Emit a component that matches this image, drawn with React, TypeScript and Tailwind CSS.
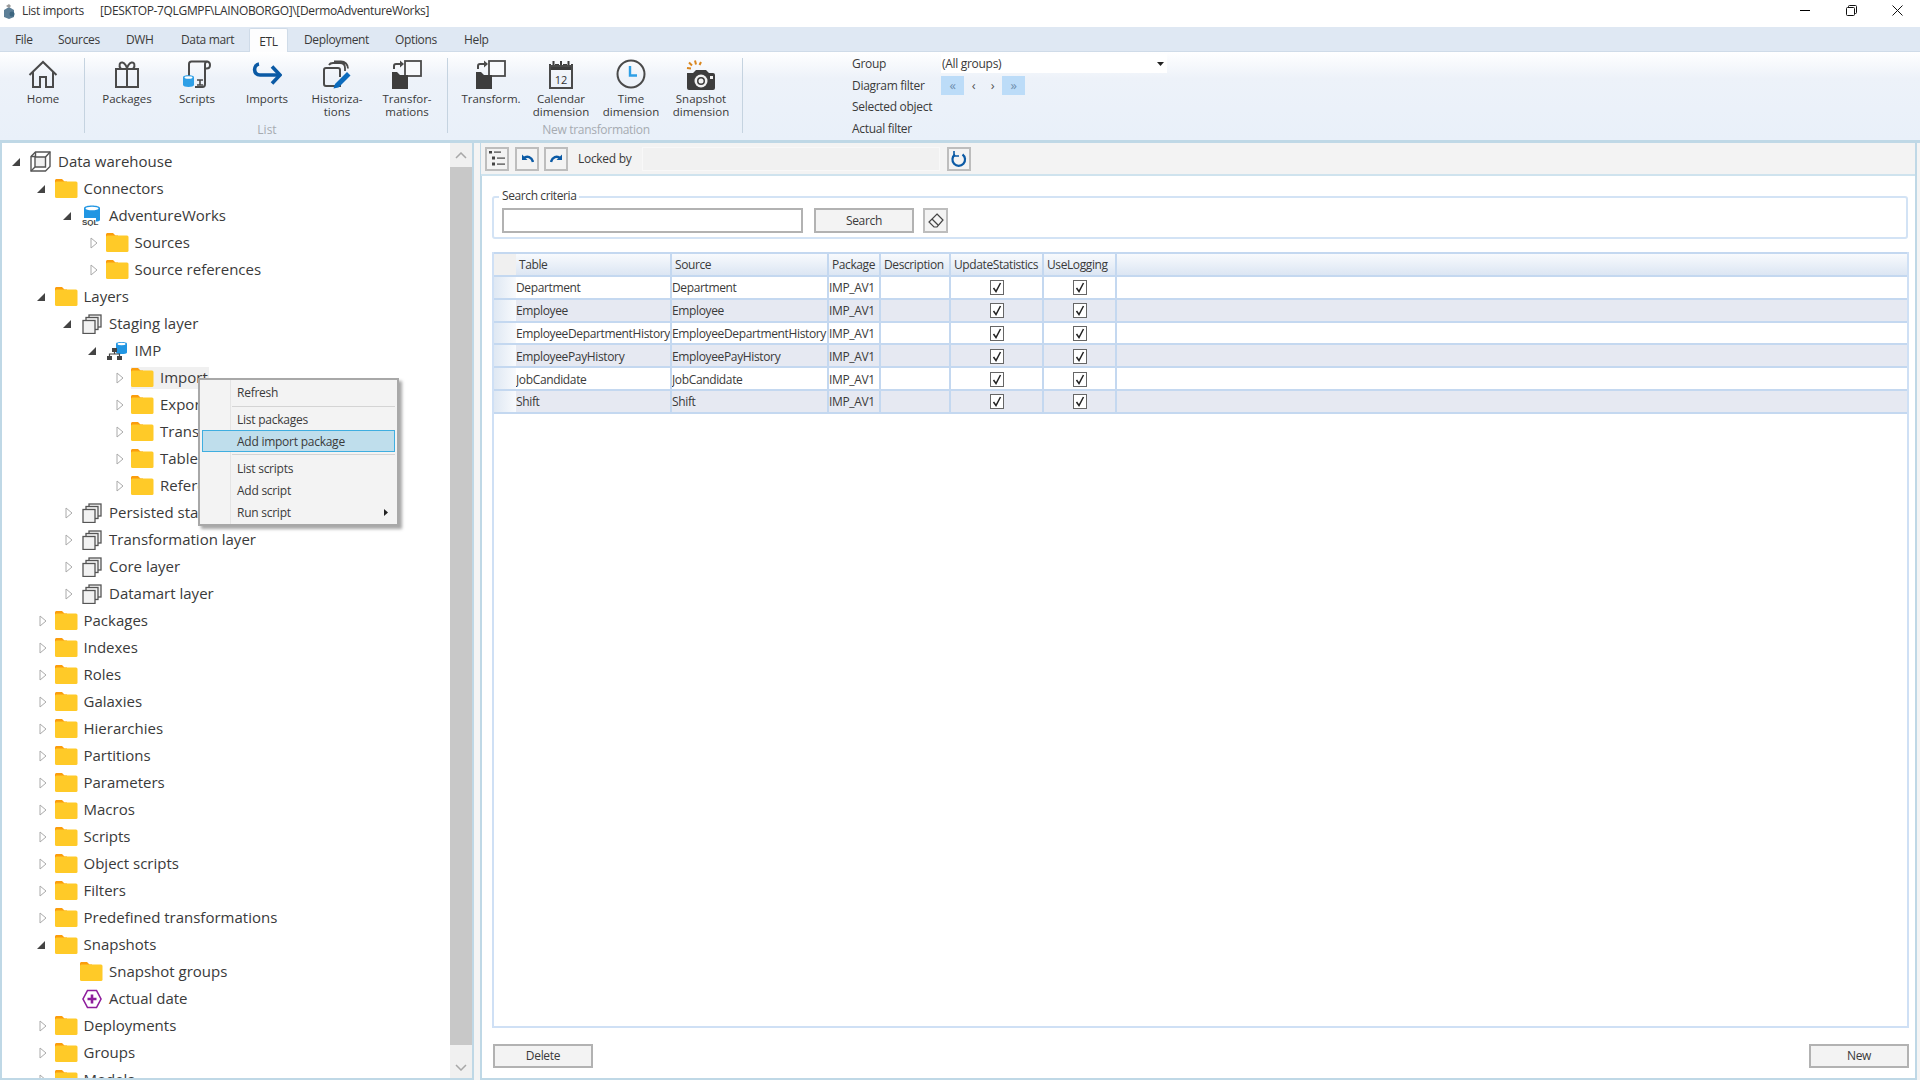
import React from 'react';

type IconName = 'folder' | 'cube' | 'sql' | 'layers' | 'imp' | 'date';

interface TreeRow {
  label: string;
  level: number;
  icon: IconName;
  state?: 'open' | 'closed';
  hover?: boolean;
}

const treeRows: TreeRow[] = [
  { label: 'Data warehouse', level: 0, icon: 'cube', state: 'open' },
  { label: 'Connectors', level: 1, icon: 'folder', state: 'open' },
  { label: 'AdventureWorks', level: 2, icon: 'sql', state: 'open' },
  { label: 'Sources', level: 3, icon: 'folder', state: 'closed' },
  { label: 'Source references', level: 3, icon: 'folder', state: 'closed' },
  { label: 'Layers', level: 1, icon: 'folder', state: 'open' },
  { label: 'Staging layer', level: 2, icon: 'layers', state: 'open' },
  { label: 'IMP', level: 3, icon: 'imp', state: 'open' },
  { label: 'Import', level: 4, icon: 'folder', state: 'closed', hover: true },
  { label: 'Export', level: 4, icon: 'folder', state: 'closed' },
  { label: 'Transformations', level: 4, icon: 'folder', state: 'closed' },
  { label: 'Tables', level: 4, icon: 'folder', state: 'closed' },
  { label: 'References', level: 4, icon: 'folder', state: 'closed' },
  { label: 'Persisted staging layer', level: 2, icon: 'layers', state: 'closed' },
  { label: 'Transformation layer', level: 2, icon: 'layers', state: 'closed' },
  { label: 'Core layer', level: 2, icon: 'layers', state: 'closed' },
  { label: 'Datamart layer', level: 2, icon: 'layers', state: 'closed' },
  { label: 'Packages', level: 1, icon: 'folder', state: 'closed' },
  { label: 'Indexes', level: 1, icon: 'folder', state: 'closed' },
  { label: 'Roles', level: 1, icon: 'folder', state: 'closed' },
  { label: 'Galaxies', level: 1, icon: 'folder', state: 'closed' },
  { label: 'Hierarchies', level: 1, icon: 'folder', state: 'closed' },
  { label: 'Partitions', level: 1, icon: 'folder', state: 'closed' },
  { label: 'Parameters', level: 1, icon: 'folder', state: 'closed' },
  { label: 'Macros', level: 1, icon: 'folder', state: 'closed' },
  { label: 'Scripts', level: 1, icon: 'folder', state: 'closed' },
  { label: 'Object scripts', level: 1, icon: 'folder', state: 'closed' },
  { label: 'Filters', level: 1, icon: 'folder', state: 'closed' },
  { label: 'Predefined transformations', level: 1, icon: 'folder', state: 'closed' },
  { label: 'Snapshots', level: 1, icon: 'folder', state: 'open' },
  { label: 'Snapshot groups', level: 2, icon: 'folder' },
  { label: 'Actual date', level: 2, icon: 'date' },
  { label: 'Deployments', level: 1, icon: 'folder', state: 'closed' },
  { label: 'Groups', level: 1, icon: 'folder', state: 'closed' },
  { label: 'Models', level: 1, icon: 'folder', state: 'closed' },
];

const tableRows = [
  ['Department', 'Department'],
  ['Employee', 'Employee'],
  ['EmployeeDepartmentHistory', 'EmployeeDepartmentHistory'],
  ['EmployeePayHistory', 'EmployeePayHistory'],
  ['JobCandidate', 'JobCandidate'],
  ['Shift', 'Shift'],
];

const TreeIcon: React.FC<{ name: IconName }> = ({ name }) => {
  if (name === 'folder') {
    return (
      <svg width="23" height="19" viewBox="0 0 23 19">
        <path d="M0 3V1.500C0 .7.7 0 1.500 0H7l2.500 2.500H12V4H0z" fill="#fb9d0c" />
        <rect x="0" y="2.500" width="22.500" height="16.500" rx="1.500" fill="#ffca28" />
      </svg>
    );
  }
  if (name === 'cube') {
    return (
      <svg width="21" height="21" viewBox="0 0 21 21" fill="none" stroke="#555" strokeWidth="1.400">
        <path d="M1 5.500L5.500 1H20v14.500L15.500 20H1z" />
        <path d="M5 6h10.500v10H5z" fill="#f0f0f0" />
        <path d="M1 5.500h4M15.500 6L20 1M1 20l4-4M5.500 1v5" />
      </svg>
    );
  }
  if (name === 'sql') {
    return (
      <svg width="20" height="21" viewBox="0 0 20 21">
        <path d="M2 3c0-3.500 16-3.500 16 0v12c0 2.500-16 2.500-16 0z" fill="#2196e3" />
        <ellipse cx="10" cy="3.500" rx="6.500" ry="1.800" fill="#fff" />
        <rect x="0" y="13" width="14" height="8" fill="#fff" />
        <text x="0" y="20" fontFamily="Liberation Sans, sans-serif" fontSize="8" fontWeight="700" fill="#444">
          SQL
        </text>
      </svg>
    );
  }
  if (name === 'layers') {
    return (
      <svg width="20" height="20" viewBox="0 0 20 20" fill="#f2f2f2" stroke="#555" strokeWidth="1.300">
        <rect x="7" y="1" width="12" height="12" />
        <rect x="4" y="3.500" width="12" height="12" />
        <rect x="1" y="6.500" width="12" height="13" />
      </svg>
    );
  }
  if (name === 'imp') {
    return (
      <svg width="21" height="20" viewBox="0 0 21 20">
        <path d="M9 2.500c0-2 11-2 11 0v9c0 2-11 2-11 0z" fill="#2196e3" />
        <ellipse cx="14.500" cy="3" rx="4" ry="1.200" fill="#fff" />
        <g fill="#444">
          <rect x="5" y="7" width="5" height="4" />
          <rect x="0" y="15" width="5" height="4" />
          <rect x="10" y="15" width="5" height="4" />
        </g>
        <path d="M7.500 11v2M2.500 15v-2h10v2" fill="none" stroke="#444" strokeWidth="1.200" />
      </svg>
    );
  }
  return (
    <svg width="20" height="20" viewBox="0 0 20 20">
      <path d="M5.500 1.500h9L19 10l-4.500 8.500h-9L1 10z" fill="#fff" stroke="#8e1d9c" strokeWidth="1.600" />
      <path d="M10 5.500v9M5.500 10h9" stroke="#8e1d9c" strokeWidth="2.600" />
    </svg>
  );
};

const Expander: React.FC<{ state?: 'open' | 'closed' }> = ({ state }) => {
  if (state === 'open') {
    return (
      <svg className="-ml-[3px]" width="10" height="10" viewBox="0 0 10 10">
        <path d="M9 1v8H1z" fill="#444" />
      </svg>
    );
  }
  if (state === 'closed') {
    return (
      <svg className="ml-[1px]" width="8" height="12" viewBox="0 0 8 12">
        <path d="M1 1l6 5-6 5z" fill="#fff" stroke="#aaa" />
      </svg>
    );
  }
  return null;
};

const ribbonIcons: Record<string, React.ReactNode> = {
  home: (
    <svg width="30" height="29" viewBox="0 0 30 29" fill="none" stroke="#4a4a4a" strokeWidth="2">
      <path d="M1.500 15L15 2l13.500 13" />
      <path d="M5 12v15h7V17h6v10h7V12" />
    </svg>
  ),
  packages: (
    <svg width="26" height="29" viewBox="0 0 26 29" fill="none" stroke="#4a4a4a" strokeWidth="2">
      <rect x="2" y="9" width="22" height="18" />
      <path d="M13 9v18M7 9C4 5 6 2 8.500 2.500 11 3 13 7 13 9c0-2 2-6 4.500-6.500C20 2 22 5 19 9" />
    </svg>
  ),
  scripts: (
    <svg width="30" height="29" viewBox="0 0 30 29">
      <path d="M7 16V4c0-1.500 1-2.500 2.500-2.500h15c2 0 3.500 1.500 3.500 3.500s-1.500 3.500-3.500 3.500H23V4c0-1 1-2.500 2.500-2.500M23 8v16c0 2-1 3-2.500 3H13" fill="none" stroke="#4a4a4a" strokeWidth="2" />
      <path d="M15 20h6M18 20v5M15 25h6" stroke="#4a4a4a" strokeWidth="1.600" fill="none" />
      <path d="M1 17c0-2.500 11-2.500 11 0v8c0 2.500-11 2.500-11 0z" fill="#2e9fe6" />
      <ellipse cx="6.500" cy="17.500" rx="4" ry="1.300" fill="#fff" />
    </svg>
  ),
  imports: (
    <svg width="30" height="24" viewBox="0 0 30 24" fill="none" stroke="#0b5aa5" strokeWidth="3.600">
      <path d="M7 2C1 3 1 13 8 13h19" />
      <path d="M20 4.500l8 8.500-8 8.500" />
    </svg>
  ),
  history: (
    <svg width="30" height="29" viewBox="0 0 30 29" fill="none">
      <path d="M19 26H4a2 2 0 0 1-2-2V10a2 2 0 0 1 2-2h12c1.500 0 2 1 2 2v7" stroke="#4a4a4a" strokeWidth="2" />
      <path d="M7 5c1-2 2-2 4-2h7c3 0 5 2 5 5v3M12 1.500h7c4 0 7 3 7 7" stroke="#4a4a4a" strokeWidth="1.800" />
      <path d="M13 24l12-12 3.500 3.500-12 12-5 1z" fill="#0b6bbd" />
    </svg>
  ),
  transform: (
    <svg width="30" height="29" viewBox="0 0 30 29">
      <rect x="13" y="1" width="16" height="15" fill="#f7f9fc" stroke="#4a4a4a" strokeWidth="1.800" />
      <path d="M0 12h5l3 3h8v14H0z" fill="#3d3d3d" />
      <path d="M2 9V6c0-1 1-2 2-2h6" fill="none" stroke="#4a4a4a" strokeWidth="2" />
      <path d="M8 .5L12 4 8 7.500z" fill="#4a4a4a" />
    </svg>
  ),
  calendar: (
    <svg width="26" height="29" viewBox="0 0 26 29">
      <path d="M1 4h24v6H1z" fill="#3d3d3d" />
      <path d="M5 1v5M13 1v5M21 1v5" stroke="#f7f9fc" strokeWidth="4" />
      <path d="M5.500 1v5M13 1v5M20.500 1v5" stroke="#3d3d3d" strokeWidth="2" />
      <rect x="2" y="6" width="22" height="22" fill="none" stroke="#4a4a4a" strokeWidth="2" />
      <text x="13" y="24" textAnchor="middle" fontFamily="Open Sans, sans-serif" fontSize="11" fill="#333">12</text>
    </svg>
  ),
  clock: (
    <svg width="30" height="30" viewBox="0 0 30 30" fill="none">
      <circle cx="15" cy="15" r="13.500" stroke="#4a4a4a" strokeWidth="2" />
      <path d="M14 7v9.500h7" stroke="#2e9fe6" strokeWidth="2.400" />
    </svg>
  ),
  snapshot: (
    <svg width="30" height="31" viewBox="0 0 30 31">
      <path d="M1 14h6l3-3h10l3 3h4a2 2 0 0 1 2 2v13a2 2 0 0 1-2 2H3a2 2 0 0 1-2-2z" fill="#3d3d3d" />
      <circle cx="15" cy="22" r="6.500" fill="#f2f2f2" />
      <circle cx="15" cy="22" r="4" fill="#3d3d3d" />
      <circle cx="15" cy="22" r="2.500" fill="#f2f2f2" />
      <rect x="24" y="17" width="3" height="3" fill="#f2f2f2" />
      <path d="M9 1.500l1 4M3 3.500l3 3M15 3l-1.500 3M1 9l4 .5" stroke="#d9861e" strokeWidth="2" />
    </svg>
  ),
};

const RibbonItem: React.FC<{ icon: string; lines: string[] }> = ({ icon, lines }) => (
  <div className="w-[70px] shrink-0 flex flex-col items-center">
    <div className="h-[32px] w-full flex items-center justify-center">{ribbonIcons[icon]}</div>
    <div className="mt-[2px] text-center text-[11.5px] leading-[13px] text-[#3a3a3a]">
      {lines.map((l) => (
        <div key={l}>{l}</div>
      ))}
    </div>
  </div>
);

const Check: React.FC = () => (
  <span className="w-[14px] h-[15px] border border-[#666] bg-white flex items-center justify-center">
    <svg width="10" height="11" viewBox="0 0 10 11" fill="none" stroke="#222" strokeWidth="1.500">
      <path d="M1.500 6l2.500 3.500L8.500 1" />
    </svg>
  </span>
);

const SmallButton: React.FC<{ children: React.ReactNode; className?: string }> = ({ children, className }) => (
  <div className={`h-[24px] border-2 border-[#bdbdbd] bg-[#f3f3f3] flex items-center justify-center ${className || ''}`}>
    {children}
  </div>
);

const App: React.FC = () => {
  return (
    <div className="relative w-[1920px] h-[1080px] overflow-hidden bg-[#f4f4f4] font-['Open_Sans',sans-serif] text-[#333]">
      {/* Title bar */}
      <div className="h-[27px] bg-white flex items-start pt-[2px] text-[12px] text-[#333] tracking-[-0.35px]">
        <svg className="ml-[2px] mr-[6px] mt-[1px]" width="14" height="16" viewBox="0 0 14 16">
          <path d="M2 7l5-3 5 3v7l-5 2-5-2z" fill="#5d7f97" />
          <path d="M4 3l3-2 2 2-2 2z" fill="#9a9a9a" />
          <circle cx="10" cy="11" r="2.500" fill="#3d6680" />
        </svg>
        <span className="w-[78px]">List imports</span>
        <span>[DESKTOP-7QLGMPF\LAINOBORGO]\[DermoAdventureWorks]</span>
        <div className="ml-auto flex items-start pt-[3px]">
          <div className="w-[46px] flex justify-center pt-[5px]">
            <div className="w-[10px] h-[1px] bg-black" />
          </div>
          <div className="w-[46px] flex justify-center">
            <svg width="11" height="11" viewBox="0 0 11 11" fill="none" stroke="#111">
              <rect x=".5" y="2.500" width="8" height="8" rx="1" />
              <path d="M2.500 2.500V1.500a1 1 0 0 1 1-1h6a1 1 0 0 1 1 1v6a1 1 0 0 1-1 1H8.500" />
            </svg>
          </div>
          <div className="w-[46px] flex justify-center">
            <svg width="11" height="11" viewBox="0 0 11 11" stroke="#111">
              <path d="M.5.5l10 10M10.500.5l-10 10" />
            </svg>
          </div>
        </div>
      </div>

      {/* Tabs */}
      <div className="h-[25px] bg-[#dfe8f3] flex items-end border-b border-[#cfdbe8] text-[12px] tracking-[-0.35px] pl-[15px] text-[#3a3a3a]">
        <div className="h-[24px] pt-[2px] w-[43px] flex items-center">File</div>
        <div className="h-[24px] pt-[2px] w-[68px] flex items-center">Sources</div>
        <div className="h-[24px] pt-[2px] w-[55px] flex items-center">DWH</div>
        <div className="h-[24px] pt-[2px] w-[68px] flex items-center">Data mart</div>
        <div className="h-[24px] pt-[2px] w-[39px] -mb-[1px] bg-[#fdfdfe] border border-b-0 border-[#cfdbe8] rounded-t-[2px] flex items-center justify-center text-[#333]">ETL</div>
        <div className="h-[24px] pt-[2px] w-[91px] ml-[16px] flex items-center">Deployment</div>
        <div className="h-[24px] pt-[2px] w-[69px] flex items-center">Options</div>
        <div className="h-[24px] pt-[2px] flex items-center">Help</div>
      </div>

      {/* Ribbon */}
      <div className="h-[82px] bg-gradient-to-b from-white via-[#edf2f9] via-30% to-[#e9f0f9] border-b-[3px] border-[#bfd8e6] flex pt-[6px] pl-[8px] box-content">
        <RibbonItem icon="home" lines={['Home']} />
        <div className="w-[1px] h-[75px] ml-[6px] mr-[7px] bg-[#c5d3e0]" />
        <div className="flex flex-col items-center h-[82px] pb-[2px]">
          <div className="flex flex-1">
            <RibbonItem icon="packages" lines={['Packages']} />
            <RibbonItem icon="scripts" lines={['Scripts']} />
            <RibbonItem icon="imports" lines={['Imports']} />
            <RibbonItem icon="history" lines={['Historiza-', 'tions']} />
            <RibbonItem icon="transform" lines={['Transfor-', 'mations']} />
          </div>
          <span className="text-[12px] leading-[16px] text-[#a6abb1]">List</span>
        </div>
        <div className="w-[1px] h-[75px] ml-[5px] mr-[8px] bg-[#c5d3e0]" />
        <div className="flex flex-col items-center h-[82px] pb-[2px]">
          <div className="flex flex-1">
            <RibbonItem icon="transform" lines={['Transform.']} />
            <RibbonItem icon="calendar" lines={['Calendar', 'dimension']} />
            <RibbonItem icon="clock" lines={['Time', 'dimension']} />
            <RibbonItem icon="snapshot" lines={['Snapshot', 'dimension']} />
          </div>
          <span className="text-[12px] leading-[16px] text-[#a6abb1] tracking-[-0.3px]">New transformation</span>
        </div>
        <div className="w-[1px] h-[75px] ml-[6px] bg-[#c5d3e0]" />
        <div className="ml-[109px] -mt-[5px] w-[315px] grid grid-cols-[89px_1fr] auto-rows-[21.700px] items-center text-[12px] tracking-[-0.3px] text-[#3a3a3a]">
          <span>Group</span>
          <div className="h-[19px] w-[226px] bg-white pl-[1px] flex items-center justify-between pr-[3px]">
            (All groups)
            <svg width="7" height="4" viewBox="0 0 7 4">
              <path d="M0 0h7L3.500 4z" fill="#222" />
            </svg>
          </div>
          <span>Diagram filter</span>
          <div className="flex items-center text-[13px] text-[#555] h-[19px]">
            <span className="w-[23px] h-[19px] bg-[#bcdcf8] text-[#6f8faf] flex items-center justify-center">«</span>
            <span className="w-[19px] text-center">‹</span>
            <span className="w-[19px] text-center">›</span>
            <span className="w-[23px] h-[19px] bg-[#bcdcf8] text-[#6f8faf] flex items-center justify-center">»</span>
          </div>
          <span className="col-span-2">Selected object</span>
          <span className="col-span-2">Actual filter</span>
        </div>
      </div>

      <div className="h-[937px] flex">
        {/* Tree panel */}
        <div className="w-[474px] shrink-0 bg-white border-l-2 border-r-2 border-b-2 border-[#bfd8e6] flex">
          <div className="flex-1 min-w-0 overflow-hidden pt-[5px] text-[15px]">
            {treeRows.map((r) => (
              <div key={r.label} className="relative h-[27px] flex items-center" style={{ paddingLeft: 8 + r.level * 25.5 }}>
                <div className="w-[14px] h-[14px] shrink-0 flex items-center justify-center">
                  <Expander state={r.state} />
                </div>
                <div className={`ml-[5px] h-[22px] flex items-center pr-[1px] ${r.hover ? 'bg-[#f0f0f0]' : ''}`}>
                  <div className="w-[23px] flex items-center justify-center shrink-0">
                    <TreeIcon name={r.icon} />
                  </div>
                  <span className="ml-[6px] whitespace-nowrap text-[#3a3a3a]">{r.label}</span>
                </div>
              </div>
            ))}
          </div>
          <div className="w-[22px] shrink-0 flex flex-col bg-[#f0f0f0]">
            <div className="h-[24px] flex items-center justify-center">
              <svg width="12" height="7" viewBox="0 0 12 7" fill="none" stroke="#a8a8a8" strokeWidth="1.500">
                <path d="M1 6l5-5 5 5" />
              </svg>
            </div>
            <div className="h-[878px] bg-[#c8c8c8]" />
            <div className="flex-1 flex items-center justify-center pt-[12px]">
              <svg width="12" height="7" viewBox="0 0 12 7" fill="none" stroke="#a8a8a8" strokeWidth="1.500">
                <path d="M1 1l5 5 5-5" />
              </svg>
            </div>
          </div>
        </div>

        {/* Content panel */}
        <div className="ml-[6px] flex-1 min-w-0 mr-[3px] flex flex-col bg-white border-l-2 border-r-2 border-b-2 border-[#bfd8e6] text-[12px] tracking-[-0.3px] text-[#3a3a3a]">
          <div className="h-[33px] bg-[#f3f3f3] border-b-2 border-[#cfe3ee] flex items-center pl-[4px] -ml-[1px]">
            <SmallButton className="w-[24px]">
              <svg width="16" height="15" viewBox="0 0 16 15" fill="#444">
                <rect x="0" y="0" width="3" height="2.500" />
                <rect x="5" y=".5" width="7" height="1.200" />
                <rect x="3" y="5.500" width="3" height="3" />
                <rect x="8" y="6.500" width="8" height="1.200" />
                <rect x="3" y="11.500" width="3" height="3" />
                <rect x="8" y="12.500" width="8" height="1.200" />
              </svg>
            </SmallButton>
            <SmallButton className="w-[24px] ml-[6px]">
              <svg width="13" height="9" viewBox="0 0 13 9" fill="none" stroke="#0b5aa5" strokeWidth="2.400">
                <path d="M12 8C11 3 6 1 2.500 4.500" />
                <path d="M1 .5V6h5.500z" fill="#0b5aa5" stroke="none" />
              </svg>
            </SmallButton>
            <SmallButton className="w-[24px] ml-[5px]">
              <svg width="13" height="9" viewBox="0 0 13 9" fill="none" stroke="#0b5aa5" strokeWidth="2.400">
                <path d="M1 8C2 3 7 1 10.500 4.500" />
                <path d="M12 .5V6H6.500z" fill="#0b5aa5" stroke="none" />
              </svg>
            </SmallButton>
            <span className="ml-[10px] w-[64px] pt-[1px]">Locked by</span>
            <div className="w-[298px] h-[24px] bg-[#f1f1f1] border border-[#f8f8f8]" />
            <SmallButton className="w-[24px] ml-[7px]">
              <svg width="16" height="18" viewBox="0 0 16 18" fill="none" stroke="#0b5aa5" strokeWidth="2.200">
                <path d="M11.500 4.500a6.300 6.300 0 1 1-7.500 0" />
                <path d="M3 1v5h5" strokeWidth="1.600" />
              </svg>
            </SmallButton>
          </div>

          <div className="flex-1 min-h-0 flex flex-col pl-[10px] pr-[6px]">
            {/* Search criteria */}
            <div className="relative mt-[20px] h-[43px] border-2 border-[#d3e3f5] rounded-[3px] flex items-start pl-[8px] pt-[10px] mr-[1px]">
              <span className="absolute -top-[10px] left-[5px] bg-white px-[3px] leading-[16px] tracking-[-0.4px]">Search criteria</span>
              <div className="w-[301px] h-[25px] border-2 border-[#b2b2b2] bg-white" />
              <div className="ml-[11px] w-[100px] h-[25px] border-2 border-[#b2b2b2] bg-[#f3f3f3] flex items-center justify-center">Search</div>
              <div className="ml-[9px] w-[25px] h-[25px] border-2 border-[#bdbdbd] bg-[#f3f3f3] flex items-center justify-center">
                <svg width="16" height="15" viewBox="0 0 16 15" fill="none" stroke="#444" strokeWidth="1.200">
                  <path d="M9 1l6 6-6 7H6L1 9z" />
                  <path d="M4 6l6 6" />
                </svg>
              </div>
            </div>

            {/* Grid */}
            <div className="mt-[13px] h-[776px] border-2 border-[#cfe0f5] border-t-0 bg-white">
              <div className="h-[25px] grid grid-cols-[22px_156px_157px_52px_70px_93px_73px_1fr] bg-gradient-to-b from-[#f8fafd] to-[#dce6f3] border-y-2 border-[#c4d8f0] tracking-[-0.4px]">
                <div className="bg-[#f0f0f0]" />
                {['Table', 'Source', 'Package', 'Description', 'UpdateStatistics', 'UseLogging'].map((h) => (
                  <div key={h} className="border-r-2 border-[#c4d8f0] pl-[3px] flex items-center whitespace-nowrap">
                    {h}
                  </div>
                ))}
                <div />
              </div>
              {tableRows.map((row, i) => (
                <div
                  key={row[0]}
                  className={`h-[22.800px] grid grid-cols-[22px_156px_157px_52px_70px_93px_73px_1fr] border-b-2 border-[#c4d8f0] tracking-[-0.36px] ${i % 2 ? 'bg-[#e6e9f2]' : 'bg-white'}`}
                >
                  <div className="bg-gradient-to-r from-[#dfe8f3] to-[#f8fafd]" />
                  <div className="border-r-2 border-[#c4d8f0] pt-[2px] flex items-center whitespace-nowrap overflow-hidden">{row[0]}</div>
                  <div className="border-r-2 border-[#c4d8f0] pt-[2px] flex items-center whitespace-nowrap overflow-hidden">{row[1]}</div>
                  <div className="border-r-2 border-[#c4d8f0] pt-[2px] flex items-center whitespace-nowrap overflow-hidden">IMP_AV1</div>
                  <div className="border-r-2 border-[#c4d8f0]" />
                  <div className="border-r-2 border-[#c4d8f0] pt-[1px] flex items-center justify-center">
                    <Check />
                  </div>
                  <div className="border-r-2 border-[#c4d8f0] pt-[1px] flex items-center justify-center">
                    <Check />
                  </div>
                  <div />
                </div>
              ))}
            </div>

            <div className="mt-[16px] flex justify-between pl-[1px]">
              <div className="w-[100px] h-[24px] border-2 border-[#b2b2b2] bg-[#f3f3f3] flex items-center justify-center">Delete</div>
              <div className="w-[100px] h-[24px] border-2 border-[#b2b2b2] bg-[#f3f3f3] flex items-center justify-center">New</div>
            </div>
          </div>
        </div>
      </div>

      {/* Context menu */}
      <div className="absolute left-[198px] top-[378px] w-[201px] h-[148px] bg-[#f3f3f3] border-2 border-[#a8a8a8] shadow-[3px_3px_3px_rgba(0,0,0,0.35)] text-[12px] tracking-[-0.25px] text-[#3a3a3a] pt-[1px]">
        <div className="absolute left-[30px] top-0 bottom-0 w-[1px] bg-[#e4e4e4]" />
        <div className="h-[24px] pl-[37px] flex items-center">Refresh</div>
        <div className="ml-[32px] mr-[2px] h-[1px] bg-[#d4d4d4] my-[1px]" />
        <div className="h-[22px] pl-[37px] pt-[1px] flex items-center">List packages</div>
        <div className="relative mx-[2px] h-[22px] bg-[#bfdeec] border border-[#3faee0] pl-[34px] pt-[1px] flex items-center">Add import package</div>
        <div className="ml-[32px] mr-[2px] h-[1px] bg-[#d4d4d4] my-[2px]" />
        <div className="h-[22px] pl-[37px] pt-[1px] flex items-center">List scripts</div>
        <div className="h-[22px] pl-[37px] pt-[1px] flex items-center">Add script</div>
        <div className="h-[22px] pl-[37px] pr-[9px] pt-[1px] flex items-center justify-between">
          Run script
          <svg width="4" height="7" viewBox="0 0 4 7">
            <path d="M0 0l4 3.500L0 7z" fill="#222" />
          </svg>
        </div>
      </div>
    </div>
  );
};

export default App;
